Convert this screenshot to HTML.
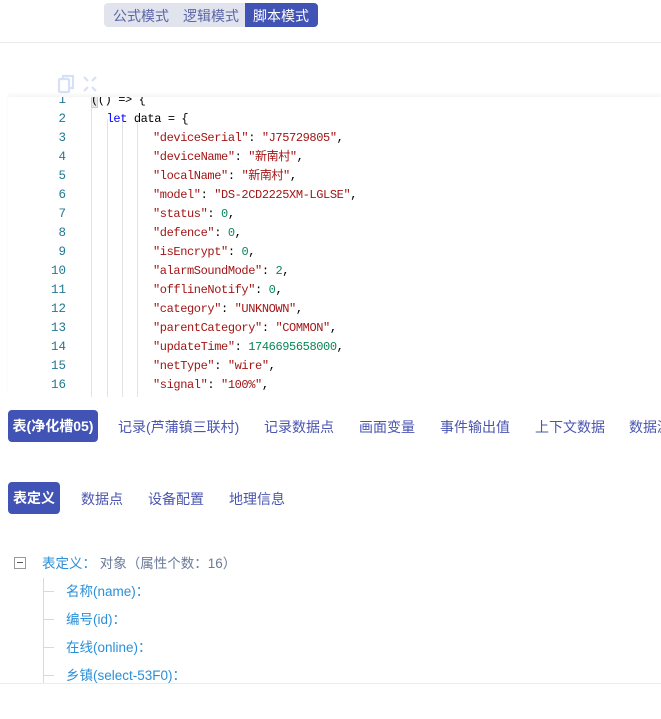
<!DOCTYPE html>
<html><head><meta charset="utf-8"><style>
*{margin:0;padding:0;box-sizing:border-box}
body{width:661px;height:719px;background:#fff;font-family:"Liberation Sans","Noto Sans CJK SC",sans-serif;position:relative;overflow:hidden}
.abs{position:absolute}
.seg{left:104px;top:3px;width:214px;height:24px;background:#e1e4ec;border-radius:4px;font-size:14px;color:#5b65a9}
.seg span{position:absolute;top:3px}
.seg .act{left:141px;top:0;width:73px;height:24px;background:#4153b5;color:#fff;border-radius:0 4px 4px 0;padding:3px 0 0 8px}
.hr{left:0;width:661px;height:1px;background:#ececec}
.code{left:8px;top:97px;width:653px;height:300px;background:#fff;box-shadow:0 -3px 3px rgba(0,0,0,.04);overflow:hidden}
.ln{position:absolute;left:0;width:58px;text-align:right;font:12.5px/19px "Liberation Mono",monospace;color:#237893}
.cl{position:absolute;white-space:pre;font:12px/19px "Liberation Mono","Noto Sans CJK SC",monospace;letter-spacing:-.4px;color:#000}
.k{color:#00f}.s{color:#a31515}.n{color:#098658}
.g{position:absolute;top:0;width:1px;height:300px;background:#e3e3e3}
.tab{font-size:14px;color:#4a55b0;position:absolute;white-space:nowrap}
.btn{position:absolute;background:#4153b5;color:#fff;font-weight:bold;font-size:14px;border-radius:4px;height:32px;line-height:32px;text-align:center;white-space:nowrap}
.tr{position:absolute;font-size:13.5px;color:#2a8fd8;white-space:nowrap}
</style></head><body>
<div class="abs seg"><span style="left:9px">公式模式</span><span style="left:79px">逻辑模式</span><span class="act">脚本模式</span></div>
<div class="abs hr" style="top:42px"></div>
<svg class="abs" style="left:57px;top:74px" width="44" height="20" viewBox="0 0 44 20">
<g fill="none" stroke="#d7e0f5" stroke-width="2.2"><rect x="2" y="5" width="10" height="13" rx="1"/><path d="M6 5V2h10v12h-4"/>
<path d="M27 3l4 4M39 3l-4 4M27 17l4-4M39 17l-4-4"/></g></svg>
<div class="abs code">
<div class="g" style="left:83px"></div><div class="g" style="left:99px;top:22px"></div><div class="g" style="left:114px;top:22px"></div><div class="g" style="left:129px;top:22px"></div>
<div class="abs" style="left:83px;top:-2px;width:7px;height:13px;background:#e8e8e8;border:1px solid #ccc"></div>
<div id="c"></div>
</div>
<script>
var L=['<span>(() =&gt; {</span>','  <span class="k">let</span> data = {',
'"deviceSerial": <s>"J75729805"</s>,','"deviceName": <s>"新南村"</s>,','"localName": <s>"新南村"</s>,','"model": <s>"DS-2CD2225XM-LGLSE"</s>,',
'"status": <n>0</n>,','"defence": <n>0</n>,','"isEncrypt": <n>0</n>,','"alarmSoundMode": <n>2</n>,','"offlineNotify": <n>0</n>,',
'"category": <s>"UNKNOWN"</s>,','"parentCategory": <s>"COMMON"</s>,','"updateTime": <n>1746695658000</n>,','"netType": <s>"wire"</s>,','"signal": <s>"100%"</s>,'];
var h='';for(var i=0;i<L.length;i++){var t=i*19-6;var x=i<2?83:145;var c=L[i];
if(i==1){x=85;}
if(i>=2){c=c.replace(/^("[^"]*")/,'<span class="s">$1</span>');}
c=c.replace(/<s>/g,'<span class="s">').replace(/<\/s>/g,'</span>').replace(/<n>/g,'<span class="n">').replace(/<\/n>/g,'</span>');
h+='<div class="ln" style="top:'+t+'px">'+(i+1)+'</div><div class="cl" style="left:'+x+'px;top:'+t+'px">'+c+'</div>';}
document.getElementById('c').innerHTML=h;
</script>
<div class="btn" style="left:8px;top:410px;width:90px">表(净化槽05)</div>
<div class="tab" style="left:118px;top:417px">记录(芦蒲镇三联村)</div>
<div class="tab" style="left:264px;top:417px">记录数据点</div>
<div class="tab" style="left:359px;top:417px">画面变量</div>
<div class="tab" style="left:440px;top:417px">事件输出值</div>
<div class="tab" style="left:535px;top:417px">上下文数据</div>
<div class="tab" style="left:629px;top:417px">数据源</div>
<div class="btn" style="left:8px;top:482px;width:52px">表定义</div>
<div class="tab" style="left:81px;top:489px">数据点</div>
<div class="tab" style="left:148px;top:489px">设备配置</div>
<div class="tab" style="left:229px;top:489px">地理信息</div>
<div class="abs" style="left:14px;top:557px;width:12px;height:12px;border:1px solid #999"><div style="position:absolute;left:2px;top:4px;width:6px;height:1px;background:#555"></div></div>
<div class="tr" style="left:42px;top:552px">表定义： <span style="color:#6b7a99">对象（属性个数：16）</span></div>
<div class="abs" style="left:43px;top:578px;width:1px;height:105px;background:#d9d9d9"></div>
<div class="abs" style="left:44px;top:591px;width:10px;height:1px;background:#d9d9d9"></div>
<div class="abs" style="left:44px;top:619px;width:10px;height:1px;background:#d9d9d9"></div>
<div class="abs" style="left:44px;top:647px;width:10px;height:1px;background:#d9d9d9"></div>
<div class="abs" style="left:44px;top:675px;width:10px;height:1px;background:#d9d9d9"></div>
<div class="tr" style="left:66px;top:580px">名称(name)：</div>
<div class="tr" style="left:66px;top:608px">编号(id)：</div>
<div class="tr" style="left:66px;top:636px">在线(online)：</div>
<div class="tr" style="left:66px;top:664px">乡镇(select-53F0)：</div>
<div class="abs" style="left:0;top:683px;width:661px;height:36px;background:#fff;border-top:1px solid #ececec"></div>
</body></html>
